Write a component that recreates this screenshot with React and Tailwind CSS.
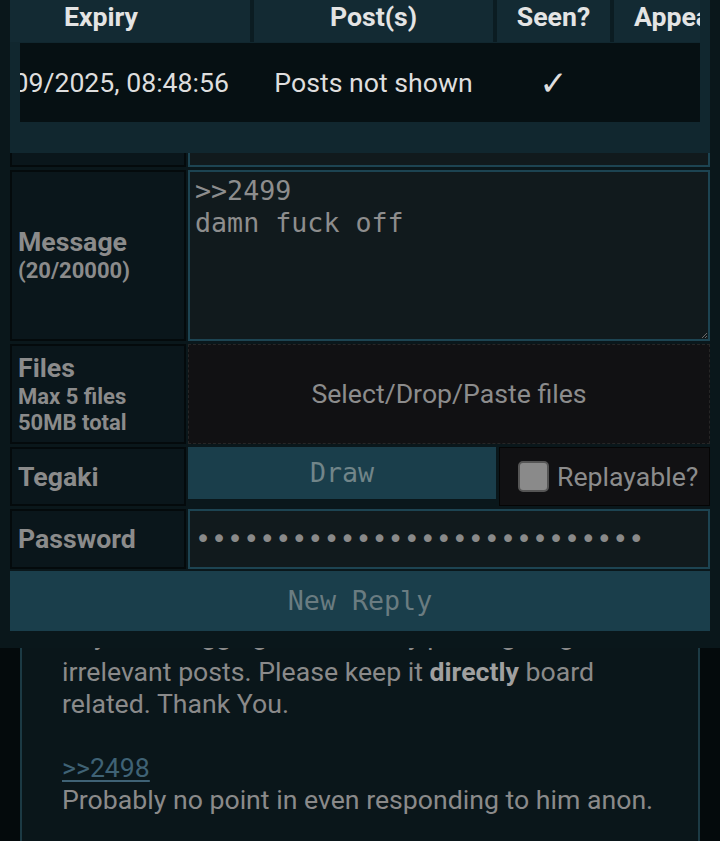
import React from 'react';

const sans = { fontFamily: 'Roboto, "Liberation Sans", sans-serif' };
const mono = { fontFamily: '"DejaVu Sans Mono", monospace' };

const Label = ({ children }) => (
  <div className="w-[176px] shrink-0 bg-[#0a161b] border-2 border-[#040a0c] flex flex-col justify-center px-[6px] font-bold text-[#8b8b8b]">
    {children}
  </div>
);

const ExpiryPopup = () => (
  <div className="absolute left-[10px] top-0 w-[700px] h-[153px] bg-[#11272f] z-10">
    <div className="w-[690px] h-[42px] overflow-hidden bg-[#0b1c22]">
      <div className="flex gap-[4px] ml-[-58px] h-full font-bold text-[26.67px] text-[#e4e4e4] leading-[32px]">
        <div className="w-[298px] shrink-0 bg-[#132a33] text-center pt-[1px]">Expiry</div>
        <div className="w-[239px] shrink-0 bg-[#132a33] text-center pt-[1px]">Post(s)</div>
        <div className="w-[113px] shrink-0 bg-[#132a33] text-center pt-[1px]">Seen?</div>
        <div className="w-[150px] shrink-0 bg-[#132a33] pl-[20px] pt-[1px] whitespace-nowrap">Appealed?</div>
      </div>
    </div>
    <div className="ml-[10px] mt-[1px] w-[680px] h-[79px] overflow-hidden bg-[#061013]">
      <div className="flex gap-[4px] ml-[-68px] h-full items-center text-[26.67px] text-[#dedede] whitespace-nowrap">
        <div className="w-[298px] shrink-0 text-right pr-[21px]">17/09/2025, 08:48:56</div>
        <div className="w-[239px] shrink-0 text-center">Posts not shown</div>
        <div className="w-[113px] shrink-0 text-center text-[34px] leading-[40px]" style={{ fontFamily: '"DejaVu Sans", sans-serif' }}>✓</div>
        <div className="w-[150px] shrink-0"></div>
      </div>
    </div>
  </div>
);

const ReplyForm = () => (
  <div className="relative bg-[#0a171b] px-[10px] pt-[44px] pb-[17px]">
    <ExpiryPopup />
    <div className="flex flex-col gap-[3px] text-[26.67px]">
      <div className="flex gap-[2px] h-[60px]">
        <Label>Name</Label>
        <div className="flex-1 border-2 border-[#1d4452] bg-[#111a1d]"></div>
      </div>
      <div className="flex gap-[2px] h-[60px]">
        <Label>Subject</Label>
        <div className="flex-1 border-2 border-[#1d4452] bg-[#111a1d]"></div>
      </div>
      <div className="flex gap-[2px] h-[171px]">
        <Label>
          <span className="leading-[29px]">Message</span>
          <span className="text-[22px] leading-[27px]">(20/20000)</span>
        </Label>
        <div className="relative flex-1 border-2 border-[#1d4452] bg-[#111a1d] pl-[5px] pt-[3px] text-[#8d8d8d] leading-[32px]" style={mono}>
          <div>&gt;&gt;2499</div>
          <div>damn fuck off</div>
          <svg className="absolute right-0 bottom-0" width="8" height="8" viewBox="0 0 8 8">
            <path d="M7 2 L2 7 M7 5 L5 7" stroke="#6b6b6b" strokeWidth="1" />
          </svg>
        </div>
      </div>
      <div className="flex gap-[2px] h-[100px]">
        <Label>
          <span className="leading-[29px]">Files</span>
          <span className="text-[22px] leading-[27px]">Max 5 files</span>
          <span className="text-[22px] leading-[25px]">50MB total</span>
        </Label>
        <div className="flex-1 border border-dashed border-[#262626] bg-[#111113] flex items-center justify-center text-[#8c8c8c]">
          Select/Drop/Paste files
        </div>
      </div>
      <div className="flex gap-[2px] h-[59px]">
        <Label>Tegaki</Label>
        <div className="flex-1 flex gap-[3px]">
          <div className="w-[308px] h-[52px] bg-[#1a3e4b] flex items-center justify-center text-[#718589]" style={mono}>
            Draw
          </div>
          <div className="flex-1 bg-[#111113] border border-[#050505] flex items-center pl-[18px] gap-[8px] text-[#8c8c8c]">
            <div className="w-[31px] h-[31px] shrink-0 rounded-[5px] bg-[#8a8a8a] border-2 border-[#555555]"></div>
            <span className="whitespace-nowrap">Replayable?</span>
          </div>
        </div>
      </div>
      <div className="flex gap-[2px] h-[60px]">
        <Label>Password</Label>
        <div className="flex-1 border-2 border-[#1d4452] bg-[#111a1d] flex items-center pl-[5px] text-[#8a8a8a]" style={mono}>
          ••••••••••••••••••••••••••••
        </div>
      </div>
    </div>
    <div className="mt-[2px] h-[60px] bg-[#1a3e4b] flex items-center justify-center text-[26.67px] text-[#6a7c81]" style={mono}>
      New Reply
    </div>
  </div>
);

const Post = () => (
  <div className="mx-[20px] h-[193px] overflow-hidden bg-[#0a161a] border-x-2 border-[#1c3a44]">
    <div className="mt-[-23px] pl-[40px] text-[26.67px] leading-[32px] text-[#8a8a8a] whitespace-nowrap">
      <div className="leading-[22px] mb-[9px]">Any user bugging the board by posting long</div>
      <div>irrelevant posts. Please keep it <b className="text-[#a0a0a0]">directly</b> board</div>
      <div>related. Thank You.</div>
      <div>&nbsp;</div>
      <div><span className="text-[#3f6275] underline underline-offset-[3px]">&gt;&gt;2498</span></div>
      <div>Probably no point in even responding to him anon.</div>
    </div>
  </div>
);

export default function App() {
  return (
    <div className="w-[720px] h-[841px] overflow-hidden bg-[#040a0c]" style={sans}>
      <ReplyForm />
      <Post />
    </div>
  );
}
